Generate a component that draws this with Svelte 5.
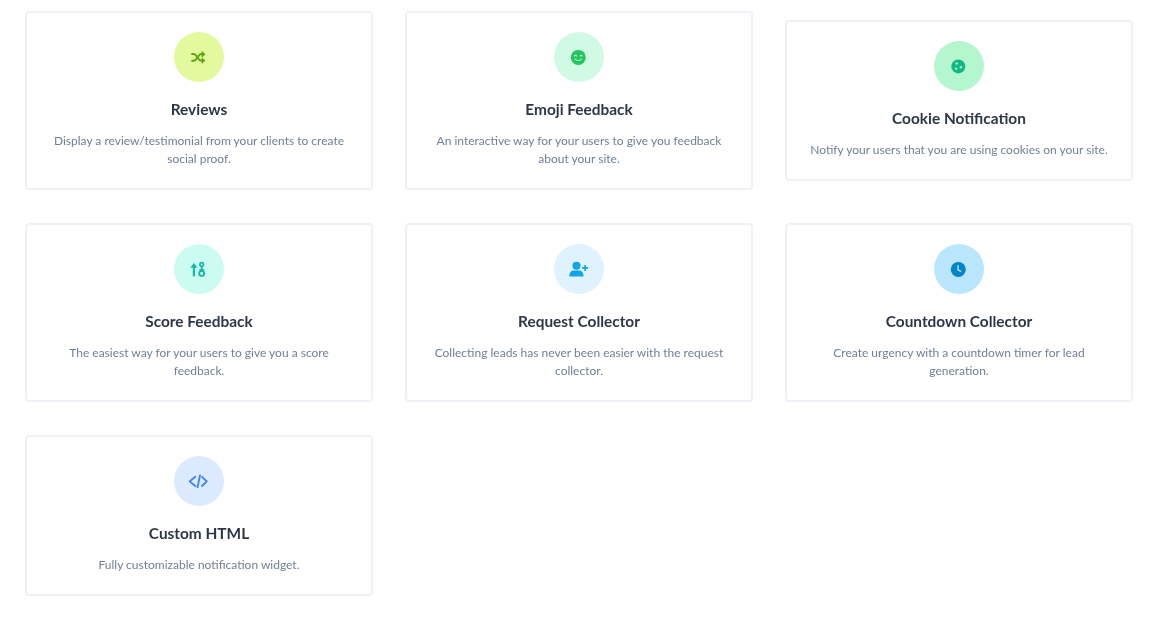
<script>
  const cards = [
    { title: 'Reviews', desc: 'Display a review/testimonial from your clients to create social proof.', bg: '#e2fa9d', fg: '#5fa30f', icon: 'shuffle' },
    { title: 'Emoji Feedback', desc: 'An interactive way for your users to give you feedback about your site.', bg: '#d0fae3', fg: '#22c55e', icon: 'smile' },
    { title: 'Cookie Notification', desc: 'Notify your users that you are using cookies on your site.', bg: '#b4f7cf', fg: '#10b981', icon: 'cookie' },
    { title: 'Score Feedback', desc: 'The easiest way for your users to give you a score feedback.', bg: '#ccfbf1', fg: '#14b8a6', icon: 'score' },
    { title: 'Request Collector', desc: 'Collecting leads has never been easier with the request collector.', bg: '#e0f2fe', fg: '#0ea5e9', icon: 'user' },
    { title: 'Countdown Collector', desc: 'Create urgency with a countdown timer for lead generation.', bg: '#bae6fd', fg: '#0284c7', icon: 'clock' },
    { title: 'Custom HTML', desc: 'Fully customizable notification widget.', bg: '#dbeafe', fg: '#3b82f6', icon: 'code' }
  ];
</script>

<main class="grid">
  {#each cards as c}
    <article class="card">
      <div class="circle" style="background:{c.bg};color:{c.fg}">
        <svg viewBox="0 0 16 16" width="16" height="16" fill="currentColor" aria-hidden="true">
          {#if c.icon === 'shuffle'}
            <path d="M1 4.6h2.2c1 0 1.7.4 2.3 1.2l3.6 4.6c.4.5.8.7 1.4.7h1.2" fill="none" stroke="currentColor" stroke-width="1.9"/>
            <path d="M1 11.4h2.2c1 0 1.7-.4 2.3-1.2l3.6-4.6c.4-.5.8-.7 1.4-.7h1.2" fill="none" stroke="currentColor" stroke-width="1.9"/>
            <path d="M11.4 1.4 15 4.9l-3.6 3.4zM11.4 7.8 15 11.1l-3.6 3.4z"/>
          {:else if c.icon === 'smile'}
            <circle cx="8" cy="8" r="7.5"/>
            <path d="M4.2 6.6c.3-1.1 1.7-1.1 2 0M9.8 6.6c.3-1.1 1.7-1.1 2 0M4.8 9.6c1.6 2 4.8 2 6.4 0" fill="none" stroke={c.bg} stroke-width="1.1" stroke-linecap="round"/>
          {:else if c.icon === 'cookie'}
            <circle cx="8" cy="8" r="7"/>
            <circle cx="6.4" cy="5" r="1.2" fill={c.bg}/>
            <circle cx="5.8" cy="10.2" r="1.2" fill={c.bg}/>
            <circle cx="10.6" cy="8.8" r="1.2" fill={c.bg}/>
          {:else if c.icon === 'score'}
            <path d="M3.6 15V3.6" fill="none" stroke="currentColor" stroke-width="2.2"/>
            <path d="M0 6.4 3.6 1.5l3.6 4.9z"/>
            <circle cx="11.4" cy="3" r="1.8" fill="none" stroke="currentColor" stroke-width="1.6"/>
            <path d="M11.4 5.2V8" stroke="currentColor" stroke-width="1.8"/>
            <circle cx="11.4" cy="12" r="2.5" fill="none" stroke="currentColor" stroke-width="1.9"/>
            <path d="M8.3 7.6h6.2l-3.1 2.8z"/>
          {:else if c.icon === 'user'}
            <circle cx="6.2" cy="4.4" r="4"/>
            <path d="M-1 15c0-3.8 2-5.8 4.4-5.8h5.4c2.4 0 4.4 2 4.4 5.8z"/>
            <path d="M11.8 6.5h6M14.8 3.5v6" stroke="currentColor" stroke-width="1.6" fill="none"/>
          {:else if c.icon === 'clock'}
            <circle cx="8" cy="8" r="7.5"/>
            <path d="M7.8 3.8v4.6l3 1.8" fill="none" stroke={c.bg} stroke-width="1.4"/>
          {:else}
            <path d="M5 3.4-.6 8 5 12.6M11.7 3.4 16.5 8l-4.8 4.6M9.7 1.9 7.2 14" fill="none" stroke="currentColor" stroke-width="1.8" stroke-linecap="round" stroke-linejoin="round"/>
          {/if}
        </svg>
      </div>
      <h3>{c.title}</h3>
      <p>{c.desc}</p>
    </article>
  {/each}
</main>

<style>
  :global(body) { margin: 0; background: #fff; }
  svg { overflow: visible; transform: translate(-0.7px, 0.4px); }
  .grid {
    display: grid;
    grid-template-columns: repeat(3, 348px);
    column-gap: 32px;
    row-gap: 33px;
    align-items: center;
    padding: 11px 0 0 25px;
    font-family: Lato, sans-serif;
    filter: blur(0.3px);
  }
  .card {
    box-sizing: border-box;
    border: 2px solid #eff1f6;
    border-radius: 4px;
    padding: 19px 20px 20px;
    text-align: center;
    display: flex;
    flex-direction: column;
    align-items: center;
  }
  .circle {
    width: 50px;
    height: 50px;
    border-radius: 50%;
    display: flex;
    align-items: center;
    justify-content: center;
  }
  h3 {
    margin: 15px 0 0;
    font-size: 15.4px;
    line-height: 24px;
    font-weight: 700;
    color: #2d3748;
  }
  p {
    margin: 11px 0 0;
    font-size: 12px;
    line-height: 18px;
    color: #718096;
  }
</style>
